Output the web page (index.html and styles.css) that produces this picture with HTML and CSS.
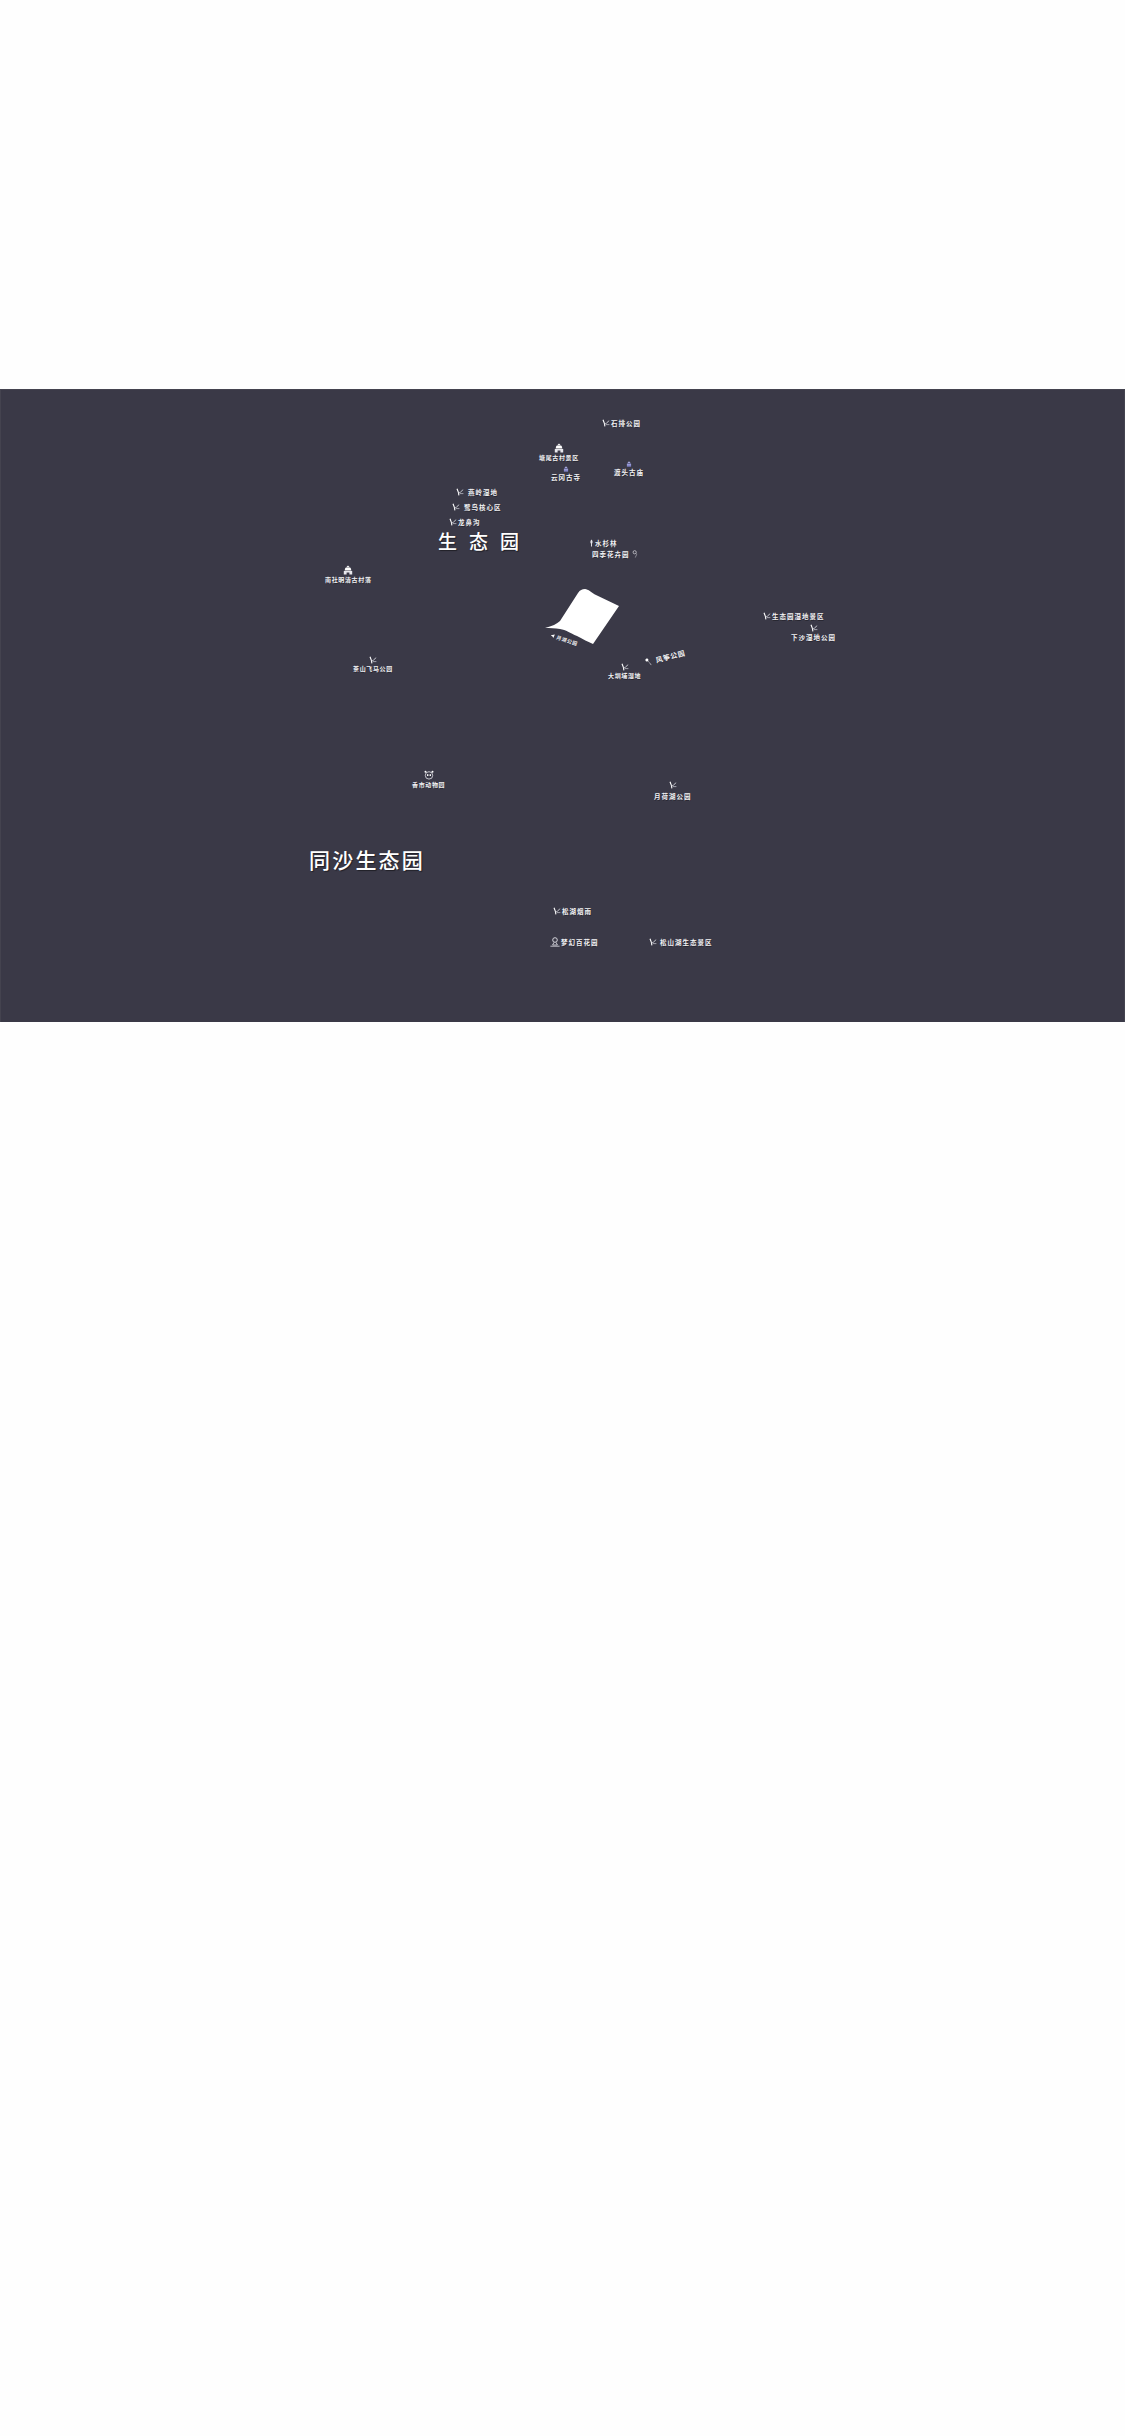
FILE: index.html
```html
<!DOCTYPE html>
<html lang="zh-CN">
<head>
<meta charset="utf-8">
<title>生态园地图</title>
<link rel="stylesheet" href="styles.css">
</head>
<body>
<svg class="defs" width="0" height="0" aria-hidden="true">
  <symbol id="i-wet" viewBox="0 0 8 8">
    <path d="M1 .8 2.4 4.4 2.9 7.4" fill="none" stroke="#fff" stroke-width="1.1"/>
    <path d="M2.6 4.8C4 4.4 5.4 4.2 6.8 1.6" fill="none" stroke="#c4c4cc" stroke-width="1"/>
    <path d="M3.6 5.6H7.4" stroke="#a0a0aa" stroke-width="1"/>
  </symbol>
  <symbol id="i-village" viewBox="0 0 10 10">
    <path d="M5 .6 7 2.4H3Z" fill="#fff"/>
    <path d="M2.4 2.8H7.6L8.4 5.4H1.6Z" fill="#fff"/>
    <path d="M.8 6H9.2V9.4H6.4V7.4H3.6V9.4H.8Z" fill="#e8e8ee"/>
  </symbol>
  <symbol id="i-temple" viewBox="0 0 8 8">
    <path d="M4 .4 6.4 3H1.6Z" fill="#a6a8e0"/>
    <path d="M1.2 3.4H6.8V7.6H1.2Z" fill="#7c7fc4"/>
    <path d="M1.2 5H6.8" stroke="#c6c8ee" stroke-width=".7"/>
  </symbol>
  <symbol id="i-tree" viewBox="0 0 6 10">
    <path d="M3 .5C4.6 2 4.8 4.5 3.6 5.8V9.5H2.4V5.8C1.2 4.5 1.4 2 3 .5Z" fill="#e4e4ea"/>
  </symbol>
  <symbol id="i-flower" viewBox="0 0 8 10">
    <circle cx="3.6" cy="2.8" r="2" fill="none" stroke="#d8d8de" stroke-width=".9"/>
    <path d="M6 4.4C6.4 6 5.2 7 4.4 9.4" fill="none" stroke="#b4b4bc" stroke-width=".9"/>
  </symbol>
  <symbol id="i-panda" viewBox="0 0 10 10">
    <circle cx="5" cy="5.4" r="3.7" fill="none" stroke="#e6e6ec" stroke-width=".8"/>
    <circle cx="1.5" cy="1.7" r="1" fill="#fff"/>
    <circle cx="8.5" cy="1.7" r="1" fill="#fff"/>
    <rect x="3" y="4.2" width="1.4" height="1.8" fill="#fff"/>
    <rect x="5.6" y="4.2" width="1.4" height="1.8" fill="#fff"/>
  </symbol>
  <symbol id="i-garden" viewBox="0 0 10 10">
    <circle cx="5" cy="3" r="2.3" fill="none" stroke="#e4e4ea" stroke-width=".9"/>
    <path d="M4 5.4 2.6 8H7.4L6 5.4M.4 9.2H9.6" fill="none" stroke="#d0d0d8" stroke-width=".9"/>
  </symbol>
  <symbol id="i-kite" viewBox="0 0 10 10">
    <circle cx="2.6" cy="2.6" r="1.5" fill="#fff"/>
    <path d="M3.4 4C4 6 5 6 5.4 8.6" fill="none" stroke="#b9b9c0" stroke-width=".8"/>
  </symbol>
  <symbol id="i-dart" viewBox="0 0 8 8">
    <path d="M1 4 6 1.4 5.4 6.4 3.8 4.8Z" fill="#fff"/>
  </symbol>
</svg>

<main class="page">
  <section class="map" aria-label="生态园地图">
    <h2 class="title title-eco">生态园</h2>
    <h2 class="title title-tongsha">同沙生态园</h2>

    <svg class="sheet" viewBox="0 0 85 65" aria-hidden="true">
      <path d="M5 42C12 40 17 38 20 35L38 7C40 4 42 3 45 3 48 3 52 7 56 9L79 20 53 58C48 56 43 53 37 50 30 47 26 44 20 43 15 42 10 42 5 42Z" fill="#fff"/>
    </svg>

    <div class="place row p-shipai"><svg class="ico"><use href="#i-wet"/></svg><span class="lb">石排公园</span></div>
    <div class="place col p-tangwei"><svg class="ico-lg"><use href="#i-village"/></svg><span class="lb sm">塘尾古村景区</span></div>
    <div class="place col p-yungang"><svg class="ico-sm"><use href="#i-temple"/></svg><span class="lb">云冈古寺</span></div>
    <div class="place col p-dutou"><svg class="ico-sm"><use href="#i-temple"/></svg><span class="lb">渡头古庙</span></div>
    <div class="place row p-yanling wide"><svg class="ico"><use href="#i-wet"/></svg><span class="lb">燕岭湿地</span></div>
    <div class="place row p-ludao wide"><svg class="ico"><use href="#i-wet"/></svg><span class="lb">鹭鸟核心区</span></div>
    <div class="place row p-longbi"><svg class="ico"><use href="#i-wet"/></svg><span class="lb">龙鼻沟</span></div>
    <div class="place row p-shuishan"><svg class="ico-tree"><use href="#i-tree"/></svg><span class="lb">水杉林</span></div>
    <div class="place row p-siji"><span class="lb">四季花卉园</span><svg class="ico"><use href="#i-flower"/></svg></div>
    <div class="place col p-nanshe"><svg class="ico-lg"><use href="#i-village"/></svg><span class="lb sm">南社明清古村落</span></div>
    <div class="place col p-chashan"><svg class="ico"><use href="#i-wet"/></svg><span class="lb sm">茶山飞马公园</span></div>
    <div class="place row p-yuehu"><svg class="ico-xs"><use href="#i-dart"/></svg><span class="lb xs">月湖公园</span></div>
    <div class="place col p-dazhen"><svg class="ico"><use href="#i-wet"/></svg><span class="lb sm">大圳埔湿地</span></div>
    <div class="place row p-fengzheng"><svg class="ico-lg"><use href="#i-kite"/></svg><span class="lb md">风筝公园</span></div>
    <div class="place row p-shengtai"><svg class="ico"><use href="#i-wet"/></svg><span class="lb">生态园湿地景区</span></div>
    <div class="place col p-xiasha"><svg class="ico"><use href="#i-wet"/></svg><span class="lb">下沙湿地公园</span></div>
    <div class="place col tall p-yuehe"><svg class="ico"><use href="#i-wet"/></svg><span class="lb">月荷湖公园</span></div>
    <div class="place col p-zoo"><svg class="ico-lg"><use href="#i-panda"/></svg><span class="lb sm">香市动物园</span></div>
    <div class="place row p-songhu"><svg class="ico"><use href="#i-wet"/></svg><span class="lb">松湖烟雨</span></div>
    <div class="place row p-menghuan"><svg class="ico-lg"><use href="#i-garden"/></svg><span class="lb">梦幻百花园</span></div>
    <div class="place row p-songshan mid"><svg class="ico"><use href="#i-wet"/></svg><span class="lb">松山湖生态景区</span></div>
  </section>
  <div class="blank"></div>
</main>
</body>
</html>
```

FILE: styles.css
```css
* { box-sizing: border-box; }
html, body { margin: 0; padding: 0; }
body {
  background: #fefefe;
  font-family: "Noto Sans CJK SC", "Noto Sans", sans-serif;
}
.defs { position: absolute; }
.page { padding-top: 389px; }
.map {
  position: relative;
  height: 633px;
  background: #3a3947;
  border: 1px solid #44434f;
  border-bottom: 0;
  overflow: hidden;
}
.blank { height: 1414px; }

/* the map is a free canvas; offsets below subtract the 389px section top and 1px border */
.title {
  position: absolute;
  margin: 0;
  color: #fff;
  font-weight: 700;
  white-space: nowrap;
  text-shadow: 1px 1px 1px rgba(0, 0, 0, .45);
}
.title-eco { left: 437px; top: 136px; font-size: 19px; font-weight: 500; line-height: 30px; letter-spacing: 12px; }
.title-tongsha { left: 308px; top: 453px; font-size: 21px; font-weight: 500; line-height: 32px; letter-spacing: 2.2px; }

.sheet { position: absolute; left: 539px; top: 196px; width: 85px; height: 65px; }

.place { position: absolute; display: flex; white-space: nowrap; }
.row { flex-direction: row; align-items: center; gap: 1px; }
.row.wide { gap: 4px; }
.row.mid { gap: 3px; }
.col { flex-direction: column; align-items: center; }
.col.tall { gap: 2px; }

.lb {
  color: #f2f2f4;
  font-size: 6.5px;
  line-height: 10px;
  letter-spacing: 1px;
  font-weight: 700;
  text-shadow: .5px .5px .5px rgba(0, 0, 0, .35);
}
.lb.sm { font-size: 6px; letter-spacing: .65px; }
.lb.xs { font-size: 5px; letter-spacing: .5px; }
.lb.md { font-size: 7px; letter-spacing: .6px; }

.ico { width: 8px; height: 8px; flex: none; }
.ico-lg { width: 10px; height: 10px; flex: none; }
.ico-sm { width: 6px; height: 6px; flex: none; }
.ico-xs { width: 6px; height: 6px; flex: none; }
.ico-tree { width: 5px; height: 8px; flex: none; }

.p-shipai { left: 601px; top: 28px; }
.p-tangwei { left: 538px; top: 53px; }
.p-yungang { left: 550px; top: 76px; }
.p-dutou { left: 613px; top: 71px; }
.p-yanling { left: 455px; top: 97px; }
.p-ludao { left: 451px; top: 112px; }
.p-longbi { left: 448px; top: 127px; }
.p-shuishan { left: 588px; top: 148px; }
.p-siji { left: 591px; top: 159px; }
.p-nanshe { left: 324px; top: 175px; }
.p-chashan { left: 352px; top: 266px; }
.p-yuehu { left: 549px; top: 240px; transform: rotate(18deg); transform-origin: left center; }
.p-dazhen { left: 607px; top: 273px; }
.p-fengzheng { left: 644px; top: 268px; transform: rotate(-15deg); transform-origin: left center; }
.p-shengtai { left: 762px; top: 221px; }
.p-xiasha { left: 790px; top: 234px; }
.p-yuehe { left: 653px; top: 391px; }
.p-zoo { left: 411px; top: 380px; }
.p-songhu { left: 552px; top: 516px; }
.p-menghuan { left: 549px; top: 547px; }
.p-songshan { left: 648px; top: 547px; }
```
